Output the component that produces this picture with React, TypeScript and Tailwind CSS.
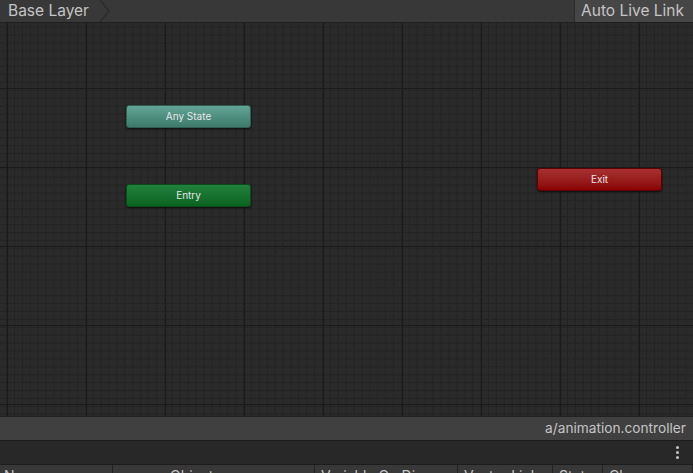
import React from "react";

function Grid() {
  return (
    <svg className="absolute inset-0 h-full w-full" xmlns="http://www.w3.org/2000/svg">
      <defs>
        <pattern id="minor" width="7.9" height="7.9" patternUnits="userSpaceOnUse" x="7" y="-14">
          <path d="M 0 0.5 L 7.9 0.5 M 0.5 0 L 0.5 7.9" stroke="#232323" strokeWidth="1" fill="none" />
        </pattern>
        <pattern id="major" width="79" height="79" patternUnits="userSpaceOnUse" x="7" y="-14">
          <rect width="79" height="79" fill="url(#minor)" />
          <path d="M 0 0.5 L 79 0.5 M 0.5 0 L 0.5 79" stroke="#1a1a1a" strokeWidth="1.2" fill="none" />
        </pattern>
      </defs>
      <rect width="100%" height="100%" fill="#2a2a2a" />
      <rect width="100%" height="100%" fill="url(#major)" />
    </svg>
  );
}

function Node({ label, x, y, cls }: { label: string; x: number; y: number; cls: string }) {
  return (
    <div
      className={`absolute flex h-[23px] w-[125px] items-center justify-center rounded-[3px] text-[10px] text-[#e6e6e6] shadow-[0_1px_2px_rgba(0,0,0,0.7)] ${cls}`}
      style={{ left: x, top: y }}
    >
      {label}
    </div>
  );
}

export default function App() {
  return (
    <div className="flex h-[473px] w-[693px] flex-col overflow-hidden bg-[#282828] font-['Inter',sans-serif] text-[#c4c4c4]">
      {/* header */}
      <div className="flex h-[23px] shrink-0 items-stretch justify-between border-b border-[#1e1e1e] bg-[#383838]">
        <div className="relative flex items-center pl-[8px] pr-[14px] text-[15.5px] leading-none">
          <span>Base Layer</span>
          <svg className="absolute right-[-8px] top-0 h-[22px] w-[12px]" viewBox="0 0 12 22">
            <path d="M1 0 L10 11 L1 22" fill="#383838" stroke="#2a2a2a" strokeWidth="1.2" />
          </svg>
        </div>
        <div className="flex items-center border-l border-[#2a2a2a] bg-[#464646] pl-[6px] pr-[9px] text-[15.5px] leading-none">
          Auto Live Link
        </div>
      </div>

      {/* canvas */}
      <div className="relative flex-1 overflow-hidden">
        <Grid />
        <Node label="Any State" x={126} y={82} cls="bg-gradient-to-b from-[#62a594] to-[#3d7a6b] border border-[#2f5e52]" />
        <Node label="Entry" x={126} y={161} cls="bg-gradient-to-b from-[#22823c] to-[#0b6321] border border-[#0a4d1a]" />
        <Node label="Exit" x={537} y={145} cls="bg-gradient-to-b from-[#a73030] to-[#8a0202] border border-[#5e0000]" />
      </div>

      {/* status bar */}
      <div className="flex h-[24px] shrink-0 items-center justify-end border-t border-[#222] bg-[#404040] pr-[7px] text-[13.7px] leading-none">
        a/animation.controller
      </div>

      {/* toolbar */}
      <div className="flex h-[24px] shrink-0 items-center justify-end border-t border-[#1c1c1c] bg-[#282828] pr-[14px]">
        <div className="flex flex-col gap-[2px]">
          <span className="h-[3px] w-[3px] rounded-full bg-[#c4c4c4]" />
          <span className="h-[3px] w-[3px] rounded-full bg-[#c4c4c4]" />
          <span className="h-[3px] w-[3px] rounded-full bg-[#c4c4c4]" />
        </div>
      </div>

      {/* table header (cut off by the window edge) */}
      <div className="flex h-[9px] shrink-0 overflow-hidden border-t border-[#1c1c1c] bg-[#383838] text-[14px] leading-none">
        <div className="w-[113px] shrink-0 border-r border-[#222] pl-[4px] pt-[4px]">Name</div>
        <div className="w-[202px] shrink-0 border-r border-[#222] pl-[57px] pt-[4px]">Object</div>
        <div className="w-[143px] shrink-0 border-r border-[#222] pl-[6px] pt-[4px]">Variable On Disc</div>
        <div className="w-[95px] shrink-0 border-r border-[#222] pl-[6px] pt-[4px]">Vector Link</div>
        <div className="w-[50px] shrink-0 border-r border-[#222] pl-[6px] pt-[4px]">State</div>
        <div className="flex-1 border-r border-[#222] pl-[6px] pt-[4px]">Changes</div>
      </div>
    </div>
  );
}
